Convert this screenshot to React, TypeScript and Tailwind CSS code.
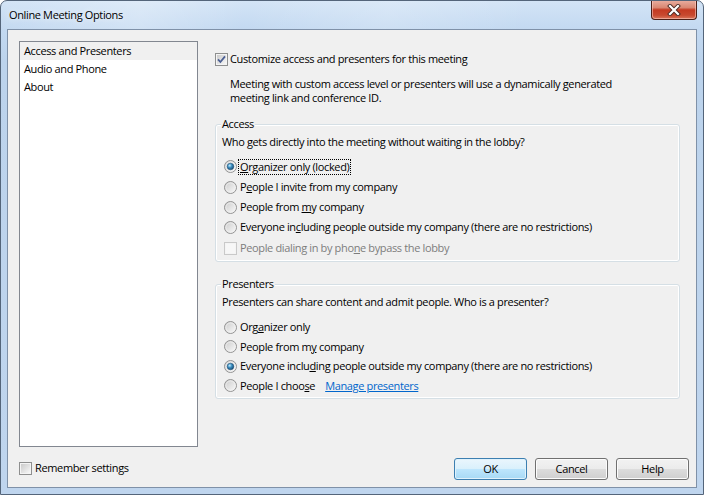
import React, { useId } from "react";

function Radio({ checked }: { checked?: boolean }) {
  const id = useId().replace(/[^a-zA-Z0-9]/g, "");
  return (
    <svg width="13" height="13" viewBox="0 0 13 13" className="shrink-0">
      <defs>
        <linearGradient id={`rg${id}`} x1="0" y1="0" x2="1" y2="1">
          <stop offset="0" stopColor="#c9c9c9" />
          <stop offset="1" stopColor="#fcfcfc" />
        </linearGradient>
        <radialGradient id={`rd${id}`} cx="0.38" cy="0.35" r="0.7">
          <stop offset="0" stopColor="#c4ecfd" />
          <stop offset="0.45" stopColor="#3c8ec0" />
          <stop offset="1" stopColor="#15486f" />
        </radialGradient>
      </defs>
      <circle cx="6.5" cy="6.5" r="6" fill={`url(#rg${id})`} stroke="#939393" />
      <circle cx="6.5" cy="6.5" r="4.6" fill="none" stroke="#f2f2f2" strokeWidth="0.7" />
      {checked && (
        <circle cx="6.5" cy="6.5" r="3.3" fill={`url(#rd${id})`} stroke="#1c4a70" strokeWidth="0.5" />
      )}
    </svg>
  );
}

function Check({ checked, disabled }: { checked?: boolean; disabled?: boolean }) {
  const id = useId().replace(/[^a-zA-Z0-9]/g, "");
  return (
    <svg width="13" height="13" viewBox="0 0 13 13" className="shrink-0">
      <defs>
        <linearGradient id={`cg${id}`} x1="0" y1="0" x2="1" y2="1">
          <stop offset="0" stopColor="#cbcbcb" />
          <stop offset="1" stopColor="#f7f7f7" />
        </linearGradient>
      </defs>
      <rect x="0.5" y="0.5" width="12" height="12" fill="#f4f4f4" stroke={disabled ? "#c9c9c9" : "#8e8f8f"} />
      <rect x="2" y="2" width="9" height="9" fill={disabled ? "#f7f7f7" : `url(#cg${id})`} />
      {checked && (
        <path d="M3 6.4 L5.4 9 L10 3.4" fill="none" stroke="#4b5f93" strokeWidth="1.8" />
      )}
    </svg>
  );
}

function Row({ h, children }: { h: string; children: React.ReactNode }) {
  return <div className={`flex items-center pl-[2px] ${h}`}>{children}</div>;
}

function Btn({ label, primary }: { label: string; primary?: boolean }) {
  return (
    <button
      className={
        primary
          ? "w-[73px] h-[22px] rounded-[3px] border border-[#3c7fb1] bg-[linear-gradient(#eaf6fd_0%,#d9f0fc_50%,#bee6fd_50%,#a7d9f5_100%)] shadow-[inset_0_0_0_1px_#e0f2fc] text-black text-[11px] leading-[14px]"
          : "w-[73px] h-[22px] rounded-[3px] border border-[#707070] bg-[linear-gradient(#f2f2f2_0%,#ebebeb_50%,#dddddd_50%,#cfcfcf_100%)] shadow-[inset_0_0_0_1px_#fcfcfc] text-black text-[11px] leading-[14px]"
      }
    >
      {label}
    </button>
  );
}

export default function App() {
  return (
    <div className="w-[704px] h-[495px] flex flex-col rounded-t-[7px] border border-[#54657a] bg-[linear-gradient(180deg,#d3e4f6_0px,#c3d9f1_28px,#bcd3ec_60px,#bfd5ee_100%)] font-['Open_Sans',sans-serif] text-[11px] leading-[14px] tracking-[-0.36px] text-black overflow-hidden">
      {/* title bar */}
      <div className="h-[28px] flex items-start justify-between bg-[linear-gradient(100deg,rgba(255,255,255,0)_0%,rgba(255,255,255,0.25)_20%,rgba(255,255,255,0)_35%,rgba(255,255,255,0.18)_55%,rgba(255,255,255,0)_75%)]">
        <div className="pl-[8px] h-[28px] flex items-center text-[11px] [text-shadow:0_0_6px_#ffffff]">
          Online Meeting Options
        </div>
        <div className="mt-[-1px] mr-[6px] w-[46px] h-[20px] rounded-b-[4px] border border-[#4b1f17] border-t-0 bg-[linear-gradient(180deg,#eab0a2_0%,#d98772_40%,#c43a22_52%,#c8492f_80%,#d9765c_100%)] shadow-[inset_0_0_0_1px_rgba(255,210,200,0.55)] flex items-center justify-center">
          <svg width="14" height="12" viewBox="0 0 14 12">
            <path d="M3 2 L11 10 M11 2 L3 10" stroke="#4a2a24" strokeWidth="4" strokeLinecap="square" />
            <path d="M3 2 L11 10 M11 2 L3 10" stroke="#ffffff" strokeWidth="2.2" strokeLinecap="square" />
          </svg>
        </div>
      </div>

      {/* client area */}
      <div className="mx-[6px] mb-[6px] flex-1 border border-[#7f91a8] bg-[#f0f0f0] flex flex-col">
        <div className="flex pt-[11px] pl-[11px]">
          {/* list */}
          <div className="w-[179px] h-[406px] border border-[#828790] bg-white">
            <div className="h-[18px] flex items-center pl-[4px] bg-[#f0f0f0]">Access and Presenters</div>
            <div className="h-[18px] flex items-center pl-[4px]">Audio and Phone</div>
            <div className="h-[18px] flex items-center pl-[4px]">About</div>
          </div>

          {/* right panel */}
          <div className="ml-[17px] w-[465px] flex flex-col">
            <div className="mt-[10px] h-[16px] flex items-center">
              <Check checked />
              <span className="ml-[2px]">Customize access and presenters for this meeting</span>
            </div>
            <div className="mt-[10px] pl-[15px]">
              <div>Meeting with custom access level or presenters will use a dynamically generated</div>
              <div>meeting link and conference ID.</div>
            </div>

            <fieldset className="mt-[12px] w-[465px] border border-[#d5dfe5] rounded-[3px] pl-[6px] pb-[3px] shadow-[inset_0_0_0_1px_#ffffff]">
              <legend className="px-[1px] ml-[-1px] bg-[#f0f0f0] leading-[14px]">Access</legend>
              <div className="mt-[4px]">Who gets directly into the meeting without waiting in the lobby?</div>
              <div className="mt-[7px]">
                <Row h="h-[21px]">
                  <Radio checked />
                  <span className="ml-[2px] px-[1px] outline outline-1 outline-dotted outline-black outline-offset-[0px]">
                    <u>O</u>rganizer only (locked)
                  </span>
                </Row>
                <Row h="h-[20px]">
                  <Radio />
                  <span className="ml-[3px]">
                    P<u>e</u>ople I invite from my company
                  </span>
                </Row>
                <Row h="h-[20px]">
                  <Radio />
                  <span className="ml-[3px]">
                    People from <u>m</u>y company
                  </span>
                </Row>
                <Row h="h-[20px]">
                  <Radio />
                  <span className="ml-[3px]">
                    Everyone in<u>c</u>luding people outside my company (there are no restrictions)
                  </span>
                </Row>
                <div className="mt-[1px]">
                  <Row h="h-[20px]">
                    <Check disabled />
                    <span className="ml-[3px] text-[#7d7d7d]">
                      People dialing in by pho<u>n</u>e bypass the lobby
                    </span>
                  </Row>
                </div>
              </div>
            </fieldset>

            <fieldset className="mt-[15px] w-[465px] border border-[#d5dfe5] rounded-[3px] pl-[6px] pb-[3px] shadow-[inset_0_0_0_1px_#ffffff]">
              <legend className="px-[1px] ml-[-1px] bg-[#f0f0f0] leading-[14px]">Presenters</legend>
              <div className="mt-[4px]">Presenters can share content and admit people. Who is a presenter?</div>
              <div className="mt-[8px]">
                <Row h="h-[20px]">
                  <Radio />
                  <span className="ml-[3px]">
                    Org<u>a</u>nizer only
                  </span>
                </Row>
                <Row h="h-[19px]">
                  <Radio />
                  <span className="ml-[3px]">
                    People from m<u>y</u> company
                  </span>
                </Row>
                <Row h="h-[20px]">
                  <Radio checked />
                  <span className="ml-[3px]">
                    Everyone inclu<u>d</u>ing people outside my company (there are no restrictions)
                  </span>
                </Row>
                <Row h="h-[19px]">
                  <Radio />
                  <span className="ml-[3px]">
                    People I choo<u>s</u>e
                  </span>
                  <span className="ml-[10px] text-[#0066cc] underline">Manage presenters</span>
                </Row>
              </div>
            </fieldset>
          </div>
        </div>

        {/* bottom row */}
        <div className="mt-[11px] h-[22px] flex items-center pl-[11px] pr-[7px]">
          <div className="flex items-center mt-[-2px]">
            <Check />
            <span className="ml-[3px]">Remember settings</span>
          </div>
          <div className="ml-auto flex gap-[8px]">
            <Btn label="OK" primary />
            <Btn label="Cancel" />
            <Btn label="Help" />
          </div>
        </div>
      </div>
    </div>
  );
}
